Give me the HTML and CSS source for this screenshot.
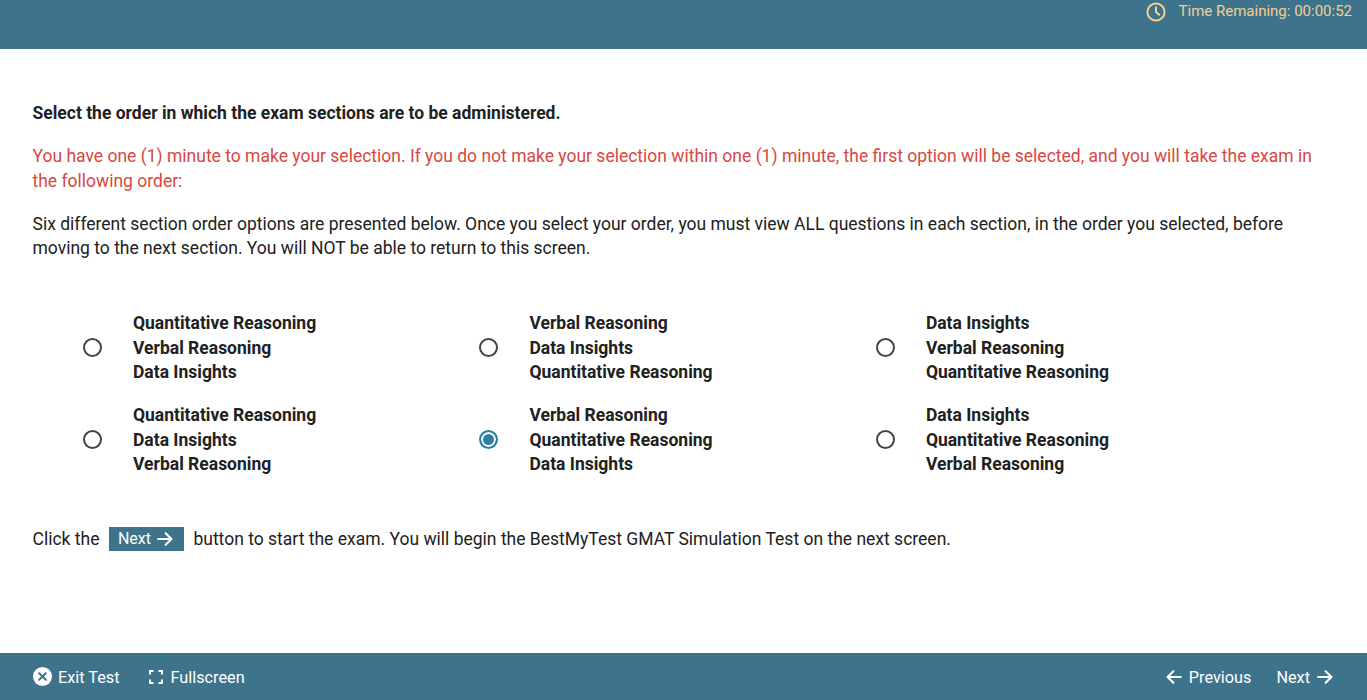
FILE: index.html
```html
<!DOCTYPE html>
<html lang="en">
<head>
  <meta charset="UTF-8" />
  <title>Section Order</title>
  <link rel="stylesheet" href="styles.css">
</head>
<body>

  <header class="top-bar">
    <div class="timer">
      <svg class="clock" width="20" height="20" viewBox="0 0 20 20" fill="none" stroke="currentColor" stroke-width="2" stroke-linecap="round" stroke-linejoin="round">
        <circle cx="10" cy="10" r="8.6" />
        <path d="M10 5.2V10.2L13.2 12.6" />
      </svg>
      <span>Time Remaining: 00:00:52</span>
    </div>
  </header>

  <main class="content">
    <p class="intro">Select the order in which the exam sections are to be administered.</p>
    <p class="warning">You have one (1) minute to make your selection. If you do not make your selection within one (1) minute, the first option will be selected, and you will take the exam in the following order:</p>
    <p class="text">Six different section order options are presented below. Once you select your order, you must view ALL questions in each section, in the order you selected, before moving to the next section. You will NOT be able to return to this screen.</p>

    <div class="options">
      <div class="option">
        <span class="radio"></span>
        <div class="option-label">Quantitative Reasoning<br>Verbal Reasoning<br>Data Insights</div>
      </div>
      <div class="option">
        <span class="radio"></span>
        <div class="option-label">Verbal Reasoning<br>Data Insights<br>Quantitative Reasoning</div>
      </div>
      <div class="option">
        <span class="radio"></span>
        <div class="option-label">Data Insights<br>Verbal Reasoning<br>Quantitative Reasoning</div>
      </div>
      <div class="option">
        <span class="radio"></span>
        <div class="option-label">Quantitative Reasoning<br>Data Insights<br>Verbal Reasoning</div>
      </div>
      <div class="option">
        <span class="radio checked"></span>
        <div class="option-label">Verbal Reasoning<br>Quantitative Reasoning<br>Data Insights</div>
      </div>
      <div class="option">
        <span class="radio"></span>
        <div class="option-label">Data Insights<br>Quantitative Reasoning<br>Verbal Reasoning</div>
      </div>
    </div>

    <p class="start">
      <span>Click the</span>
      <span class="next-chip">Next
        <svg width="16" height="14" viewBox="0 0 16 14" fill="none" stroke="currentColor" stroke-width="2" stroke-linecap="round" stroke-linejoin="round"><path d="M1.2 7H14.5M8.6 1.2L14.5 7L8.6 12.8" /></svg>
      </span>
      <span>button to start the exam. You will begin the BestMyTest GMAT Simulation Test on the next screen.</span>
    </p>
  </main>

  <footer class="bottom-bar">
    <div class="bar-group">
      <a class="bar-link">
        <svg class="exit-icon" width="19" height="19" viewBox="0 0 19 19"><circle cx="9.5" cy="9.5" r="9.5" fill="#fff" /><path d="M6.2 6.2L12.8 12.8M12.8 6.2L6.2 12.8" stroke="#3d748c" stroke-width="2" stroke-linecap="round" /></svg>
        Exit Test
      </a>
      <a class="bar-link wide">
        <svg class="full-icon" width="14" height="14" viewBox="0 0 14 14" fill="none" stroke="#fff" stroke-width="2"><path d="M1 4.5V1H4.5M9.5 1H13V4.5M13 9.5V13H9.5M4.5 13H1V9.5" /></svg>
        Fullscreen
      </a>
    </div>
    <div class="bar-group nav">
      <a class="bar-link">
        <svg class="nav-icon" width="16" height="14" viewBox="0 0 16 14" fill="none" stroke="#fff" stroke-width="2" stroke-linecap="round" stroke-linejoin="round"><path d="M14.8 7H1.5M7.4 1.2L1.5 7L7.4 12.8" /></svg>
        Previous
      </a>
      <a class="bar-link">
        Next
        <svg class="nav-icon" width="16" height="14" viewBox="0 0 16 14" fill="none" stroke="#fff" stroke-width="2" stroke-linecap="round" stroke-linejoin="round"><path d="M1.2 7H14.5M8.6 1.2L14.5 7L8.6 12.8" /></svg>
      </a>
    </div>
  </footer>

</body>
</html>
```

FILE: styles.css
```css
html, body {
  height: 100%;
}

body {
  margin: 0;
  height: 700px;
  display: flex;
  flex-direction: column;
  font-family: Roboto, sans-serif;
  font-size: 17.5px;
  line-height: 24.5px;
  color: #212121;
  background: #fff;
  overflow: hidden;
}

.top-bar {
  height: 49px;
  flex-shrink: 0;
  background: #3d748c;
  display: flex;
  justify-content: flex-end;
  align-items: flex-start;
  padding-right: 15px;
}

.timer {
  display: flex;
  align-items: center;
  gap: 13px;
  height: 22px;
  color: #f3cf92;
  font-size: 15px;
  line-height: 22px;
}

.clock {
  margin-top: 1px;
}

.content {
  flex: 1;
  padding: 52px 32px 0 32.5px;
}

.content p {
  margin: 0;
}

.intro {
  font-weight: 700;
  margin-bottom: 18.5px !important;
}

.warning {
  color: #d9473f;
  margin-bottom: 18.5px !important;
}

.options {
  display: grid;
  grid-template-columns: repeat(3, 396.45px);
  row-gap: 18.5px;
  margin: 50.5px 0 50px 0;
  padding-left: 50.5px;
}

.option {
  display: flex;
  align-items: center;
  gap: 31px;
}

.radio {
  width: 19px;
  height: 19px;
  box-sizing: border-box;
  border: 2px solid #444;
  border-radius: 50%;
  flex-shrink: 0;
}

.radio.checked {
  border-color: #2f7fa3;
  background: #2f7fa3;
  box-shadow: inset 0 0 0 2px #fff;
}

.option-label {
  font-weight: 700;
}

.start {
  display: flex;
  align-items: center;
  gap: 9.5px;
}

.next-chip {
  display: inline-flex;
  align-items: center;
  justify-content: center;
  gap: 6px;
  width: 75px;
  height: 24px;
  box-sizing: border-box;
  padding-right: 2px;
  background: #3d748c;
  color: #fff;
  font-size: 16px;
}

.bottom-bar {
  height: 47px;
  flex-shrink: 0;
  box-sizing: border-box;
  padding: 3px 33px 0 33px;
  background: #3d748c;
  display: flex;
  justify-content: space-between;
  align-items: center;
}

.bar-group {
  display: flex;
  align-items: center;
  gap: 29px;
}

.bar-group.nav {
  gap: 25px;
}

.bar-link {
  display: flex;
  align-items: center;
  gap: 6px;
  color: #fff;
  font-size: 16.25px;
}

.bar-link.wide {
  gap: 8px;
}

.exit-icon, .full-icon, .nav-icon {
  margin-top: -3px;
}

.nav-icon {
  margin-left: 1px;
  margin-right: 1px;
}
```
